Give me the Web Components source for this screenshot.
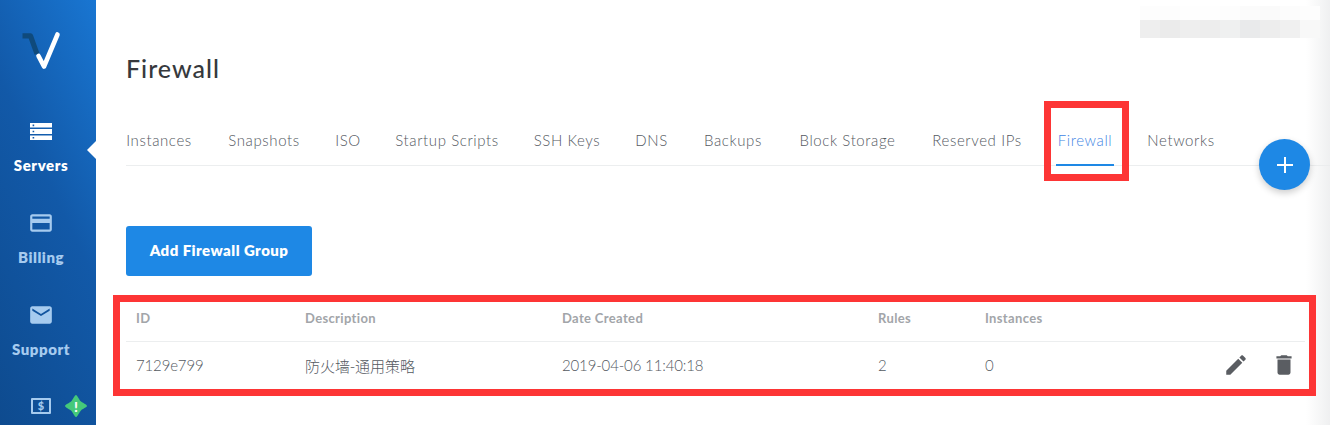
<!DOCTYPE html>
<html>
<head>
<meta charset="utf-8">
<style>
html, body { margin: 0; height: 100%; background: #fff; overflow: hidden; }
body { font-family: Lato, "Noto Sans CJK SC", sans-serif; color: #5c6269; }
</style>
</head>
<body>
<app-shell>
    <side-rail slot="rail">
        <rail-item label="Servers" active>
            <svg viewBox="0 0 22 17" width="22" height="17" fill="currentColor"><path fill-rule="evenodd" d="M0 0h22v4.6H0zM2.6 1.6v1.6h1.6V1.6zM0 6.1h22v4.8H0zM2.6 7.7v1.6h1.6V7.7zM0 12.4h22V17H0zM2.6 14v1.6h1.6V14z"/></svg>
        </rail-item>
        <rail-item label="Billing">
            <svg viewBox="0 0 24 24" width="26" height="26" fill="currentColor"><path d="M20 4H4c-1.11 0-1.99.89-1.99 2L2 18c0 1.11.89 2 2 2h16c1.11 0 2-.89 2-2V6c0-1.11-.89-2-2-2zm0 14H4v-6h16v6zm0-10H4V6h16v2z"/></svg>
        </rail-item>
        <rail-item label="Support">
            <svg viewBox="0 0 24 24" width="26" height="26" fill="currentColor"><path d="M20 4H4c-1.1 0-1.99.9-1.99 2L2 18c0 1.1.9 2 2 2h16c1.1 0 2-.9 2-2V6c0-1.1-.9-2-2-2zm0 4l-8 5-8-5V6l8 5 8-5v2z"/></svg>
        </rail-item>
        <rail-balance></rail-balance>
    </side-rail>

    <h-title>Firewall</h-title>
    <tab-bar>
        <tab-link w="66">Instances</tab-link>
        <tab-link w="72">Snapshots</tab-link>
        <tab-link w="24">ISO</tab-link>
        <tab-link w="102">Startup Scripts</tab-link>
        <tab-link w="66">SSH Keys</tab-link>
        <tab-link w="31">DNS</tab-link>
        <tab-link w="60">Backups</tab-link>
        <tab-link w="97">Block Storage</tab-link>
        <tab-link w="90">Reserved IPs</tab-link>
        <tab-link w="54" active>Firewall</tab-link>
        <tab-link w="66">Networks</tab-link>
    </tab-bar>
    <blue-button>Add Firewall Group</blue-button>
    <firewall-table>
        <firewall-row slot="rows" data-id="7129e799" data-desc="防火墙-通用策略" data-date="2019-04-06 11:40:18" data-rules="2" data-inst="0"></firewall-row>
    </firewall-table>

    <add-fab slot="over"></add-fab>
    <mark-box slot="over" style="left:1044px;top:101px;width:85px;height:80px"></mark-box>
    <mark-box slot="over" style="left:113px;top:295px;width:1203px;height:101px"></mark-box>
    <blur-patch slot="over"></blur-patch>
</app-shell>

<script>
class AppShell extends HTMLElement {
    constructor() {
        super();
        this.attachShadow({ mode: "open" }).innerHTML = `<style>
:host { display: flex; position: relative; width: 1330px; height: 425px; overflow: hidden; }
main { flex: 1; min-width: 0; padding-left: 30px; display: flex; flex-direction: column; }
.edge { position: absolute; top: 0; right: 0; bottom: 0; width: 24px; background: linear-gradient(to right, rgba(235,236,237,0), rgba(235,236,237,.8)); }
</style>
<slot name="rail"></slot>
<main><slot></slot></main>
<div class="edge"></div>
<slot name="over"></slot>`;
    }
}

class SideRail extends HTMLElement {
    constructor() {
        super();
        this.attachShadow({ mode: "open" }).innerHTML = `<style>
:host { display: flex; flex-direction: column; flex: none; width: 96px; height: 425px; background: linear-gradient(65deg, #0e4b8f 0%, #1259a8 55%, #1976d2 100%); }
.logo { height: 108px; flex: none; padding-left: 18px; box-sizing: border-box; }
svg { display: block; margin-top: 28px; }
</style>
<div class="logo">
    <svg width="48" height="44" viewBox="0 0 48 44" fill="none" stroke-width="4.6" stroke-linejoin="round">
        <path d="M4.5 7.8h8L19 26" stroke="#0f4a7c" stroke-width="5.2"/>
        <path d="M20.5 28l5.5 10.5L39.5 6.5" stroke="#fff" stroke-linecap="round"/>
    </svg>
</div>
<slot></slot>`;
    }
}

class RailItem extends HTMLElement {
    constructor() {
        super();
        const active = this.hasAttribute("active");
        this.attachShadow({ mode: "open" }).innerHTML = `<style>
:host { display: flex; flex-direction: column; align-items: center; position: relative; height: 92px; box-sizing: border-box; padding: 10px 14px 0 0; color: ${active ? "#fff" : "#a6cbef"}; }
.icon { height: 26px; display: flex; align-items: center; justify-content: center; }
.label { margin-top: 11px; font-size: 15px; line-height: 20px; font-weight: 800; letter-spacing: .55px; white-space: nowrap; }
.notch { position: absolute; right: 0; top: 33px; border: 9px solid transparent; border-left: 0; border-right-color: #fff; }
</style>
<div class="icon"><slot></slot></div>
<div class="label">${this.getAttribute("label")}</div>
${active ? '<div class="notch"></div>' : ""}`;
    }
}

class RailBalance extends HTMLElement {
    constructor() {
        super();
        this.attachShadow({ mode: "open" }).innerHTML = `<style>
:host { display: flex; align-items: center; height: 26px; margin-top: 9px; padding-left: 31px; position: relative; }
.money { box-sizing: border-box; width: 20px; height: 16px; border: 2px solid #a6cbef; border-radius: 1px; color: #a6cbef; font-size: 11px; font-weight: 900; line-height: 12px; text-align: center; }
.alert { position: relative; margin-left: 14px; width: 22px; height: 22px; color: #fff; display: flex; align-items: center; justify-content: center; font-size: 14px; font-weight: 900; }
.alert svg { position: absolute; inset: 0; }
.alert span { position: relative; }
</style>
<div class="money">$</div>
<div class="alert">
    <svg viewBox="0 0 22 22" width="22" height="22"><path fill="#45c97a" d="M11 0c1.2 0 3.6 5.6 5 6.6S22 9.8 22 11s-4.6 3-6 4.4S12.2 22 11 22s-3.6-5.6-5-6.6S0 12.2 0 11s4.6-3 6-4.4S9.8 0 11 0z"/></svg>
    <span>!</span>
</div>`;
    }
}

class HTitle extends HTMLElement {
    constructor() {
        super();
        this.attachShadow({ mode: "open" }).innerHTML = `<style>
:host { display: flex; align-items: center; flex: none; height: 100px; padding-top: 38px; padding-bottom: 2px; box-sizing: border-box; font-size: 25px; font-weight: 500; letter-spacing: 1px; color: #36393d; }
</style><slot></slot>`;
    }
}

class TabBar extends HTMLElement {
    constructor() {
        super();
        this.attachShadow({ mode: "open" }).innerHTML = `<style>
:host { display: flex; flex: none; gap: 36px; height: 66px; box-sizing: border-box; border-bottom: 1px solid #eceeef; }
</style><slot></slot>`;
    }
}

class TabLink extends HTMLElement {
    constructor() {
        super();
        const active = this.hasAttribute("active");
        this.attachShadow({ mode: "open" }).innerHTML = `<style>
:host { display: flex; justify-content: center; align-items: center; position: relative; height: 66px; padding-top: 14px; box-sizing: border-box; width: ${this.getAttribute("w")}px; font-size: 15px; font-weight: 300; letter-spacing: .6px; white-space: nowrap; color: ${active ? "#3f86e4" : "#54595f"}; }
.line { position: absolute; left: -2px; right: -2px; bottom: 0; height: 2px; background: #1e88e5; }
</style><slot></slot>${active ? '<div class="line"></div>' : ""}`;
    }
}

class BlueButton extends HTMLElement {
    constructor() {
        super();
        this.attachShadow({ mode: "open" }).innerHTML = `<style>
:host { display: flex; align-items: center; justify-content: center; flex: none; align-self: flex-start; width: 186px; height: 50px; padding-bottom: 2px; box-sizing: border-box; margin-top: 60px; border-radius: 3px; background: #1e88e5; color: #fff; font-size: 15px; font-weight: 800; letter-spacing: .45px; }
</style><slot></slot>`;
    }
}

const COLS = "169px 257px 316px 107px 1fr 120px";

class FirewallTable extends HTMLElement {
    constructor() {
        super();
        this.attachShadow({ mode: "open" }).innerHTML = `<style>
:host { display: block; flex: none; width: 1179px; margin-top: 20px; }
.head { display: grid; grid-template-columns: ${COLS}; align-items: center; height: 46px; box-sizing: border-box; border-bottom: 1px solid #eceeef; padding: 0 0 1px 10px; font-size: 13px; font-weight: 700; letter-spacing: .35px; color: #a2a5a9; }
</style>
<div class="head"><div>ID</div><div>Description</div><div>Date Created</div><div>Rules</div><div>Instances</div><div></div></div>
<slot name="rows"></slot>`;
    }
}

class FirewallRow extends HTMLElement {
    constructor() {
        super();
        const d = this.dataset;
        this.attachShadow({ mode: "open" }).innerHTML = `<style>
:host { display: grid; grid-template-columns: ${COLS}; align-items: center; height: 48px; box-sizing: border-box; padding: 0 0 2px 10px; font-size: 15px; font-weight: 300; letter-spacing: -.15px; color: #54595f; }
.cjk { font-family: "Noto Sans CJK SC", sans-serif; font-weight: 300; font-size: 15px; letter-spacing: 0; }
.acts { display: flex; justify-content: flex-end; gap: 22px; padding-right: 8px; color: #5a5d62; }
svg { display: block; }
</style>
<div>${d.id}</div><div class="cjk">${d.desc}</div><div>${d.date}</div><div>${d.rules}</div><div>${d.inst}</div>
<div class="acts">
    <svg viewBox="0 0 24 24" width="26" height="26" fill="currentColor"><path d="M3 17.25V21h3.75L17.81 9.94l-3.75-3.75L3 17.25zM20.71 7.04c.39-.39.39-1.02 0-1.41l-2.34-2.34c-.39-.39-1.02-.39-1.41 0l-1.83 1.83 3.75 3.75 1.83-1.83z"/></svg>
    <svg viewBox="0 0 24 24" width="26" height="26" fill="currentColor"><path d="M6 19c0 1.1.9 2 2 2h8c1.1 0 2-.9 2-2V7H6v12zM19 4h-3.5l-1-1h-5l-1 1H5v2h14V4z"/></svg>
</div>`;
    }
}

class AddFab extends HTMLElement {
    constructor() {
        super();
        this.attachShadow({ mode: "open" }).innerHTML = `<style>
:host { position: absolute; left: 1259px; top: 139px; width: 51px; height: 51px; border-radius: 50%; background: #1e88e5; box-shadow: 0 3px 7px rgba(0,0,0,.2); display: flex; align-items: center; justify-content: center; }
</style>
<svg width="18" height="18" viewBox="0 0 18 18" fill="#fff"><path d="M8 1h2v7h7v2h-7v7H8v-7H1V8h7z"/></svg>`;
    }
}

class MarkBox extends HTMLElement {
    constructor() {
        super();
        this.attachShadow({ mode: "open" }).innerHTML = `<style>
:host { position: absolute; box-sizing: border-box; border: 7px solid #fd3535; }
</style>`;
    }
}

// the pixelated smudge over the account name, top right
class BlurPatch extends HTMLElement {
    constructor() {
        super();
        const rows = [
            ["#fdfdfd", "#fdfdfd", "#fefefe", "#fefefe", "#fdfdfd", "#fbfbfb", "#fafafa", "#fcfcfc", "#fdfdfd"],
            ["#eeeeee", "#ebebeb", "#eeeeee", "#ededed", "#eff0f0", "#e9eaeb", "#ededed", "#f0f0f0", "#f8f8f8"]
        ];
        const cells = rows.flat().map(c => `<i style="background:${c}"></i>`).join("");
        this.attachShadow({ mode: "open" }).innerHTML = `<style>
:host { position: absolute; left: 1140px; top: 6px; width: 180px; height: 32px; display: grid; grid-template-columns: repeat(9, 20px); grid-template-rows: 14px 18px; }
</style>${cells}`;
    }
}

customElements.define("app-shell", AppShell);
customElements.define("side-rail", SideRail);
customElements.define("rail-item", RailItem);
customElements.define("rail-balance", RailBalance);
customElements.define("h-title", HTitle);
customElements.define("tab-bar", TabBar);
customElements.define("tab-link", TabLink);
customElements.define("blue-button", BlueButton);
customElements.define("firewall-table", FirewallTable);
customElements.define("firewall-row", FirewallRow);
customElements.define("add-fab", AddFab);
customElements.define("mark-box", MarkBox);
customElements.define("blur-patch", BlurPatch);
</script>
</body>
</html>
